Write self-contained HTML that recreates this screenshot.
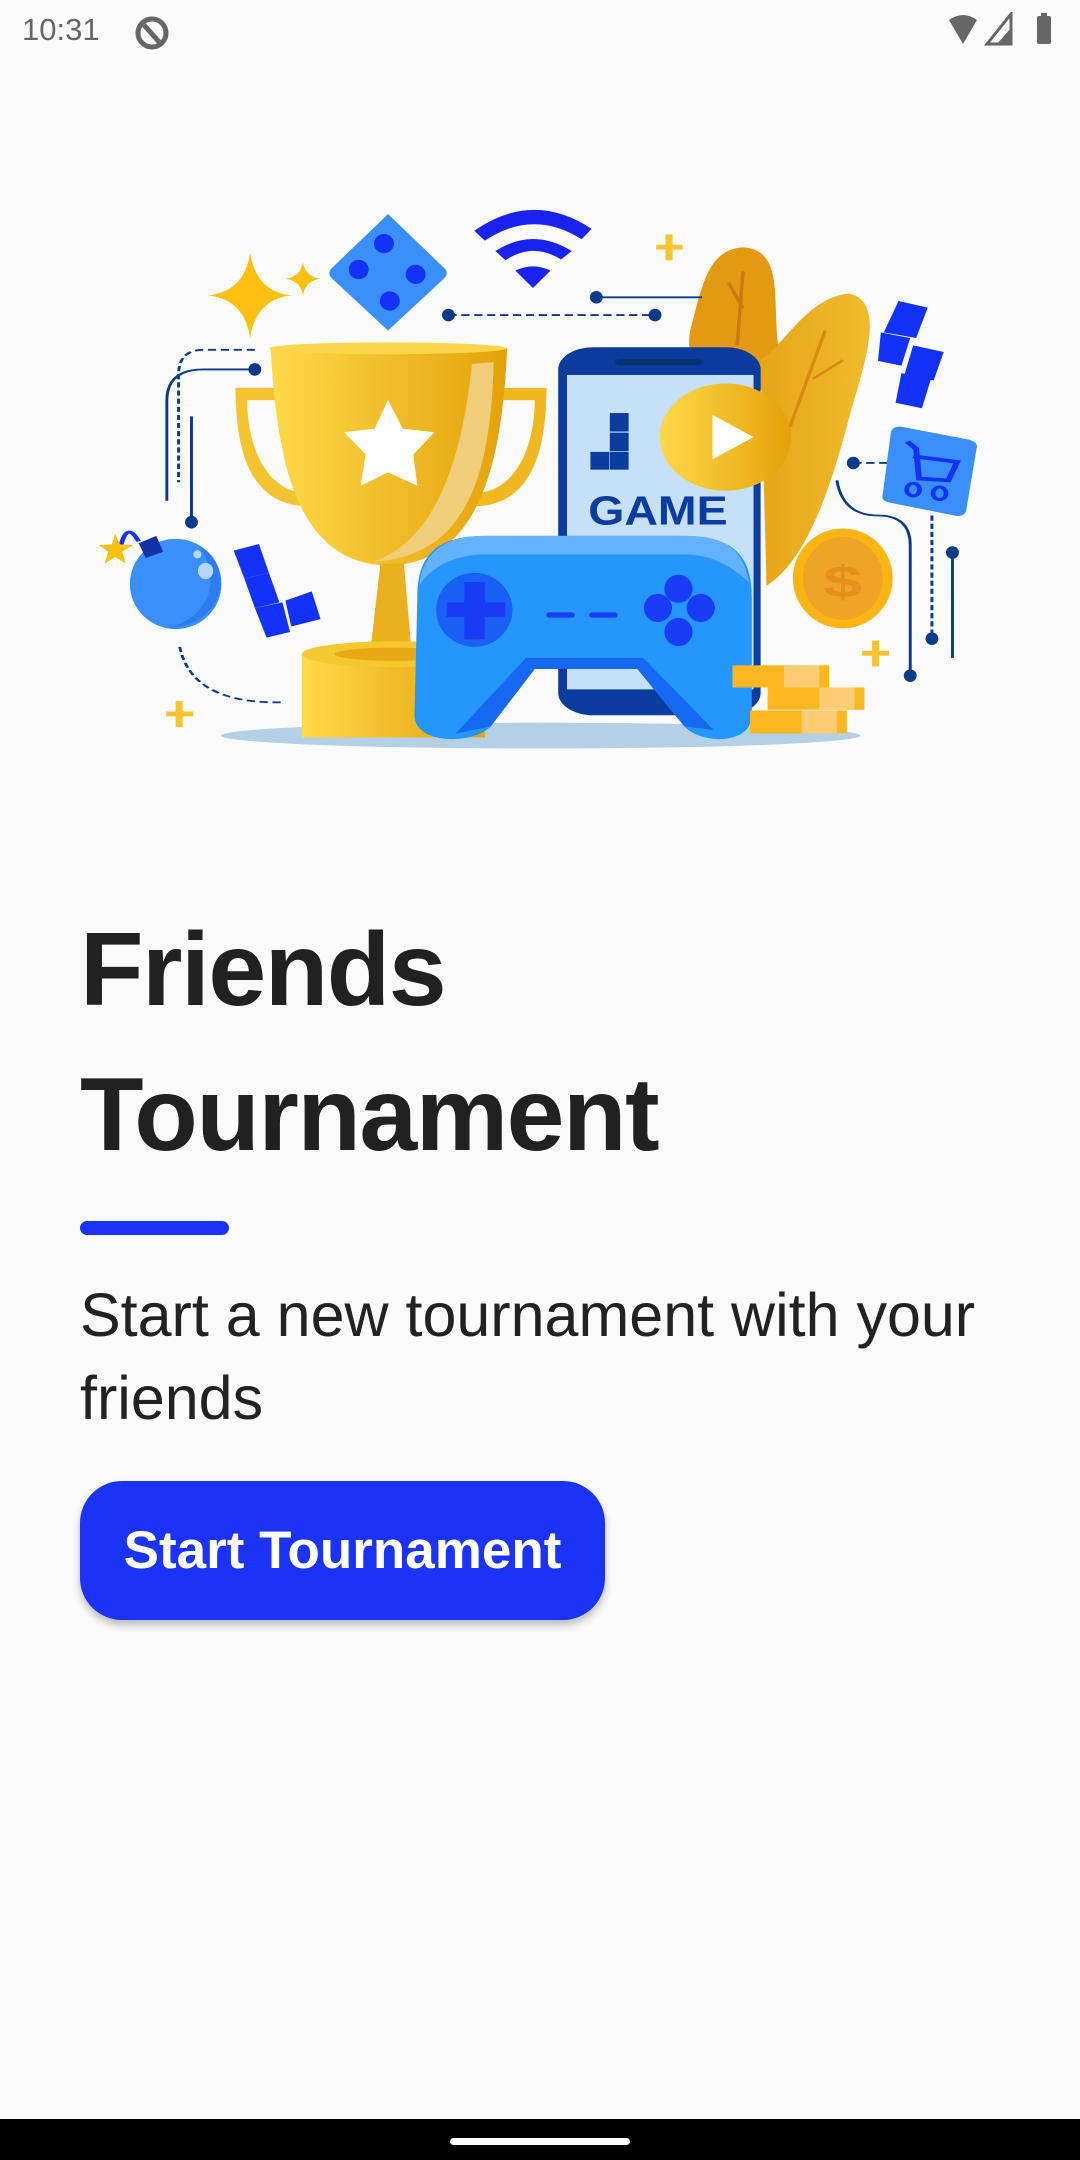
<!DOCTYPE html>
<html><head><meta charset="utf-8"><style>
*{margin:0;padding:0;box-sizing:border-box}
body{width:1080px;height:2160px;background:#fafafa;position:relative;overflow:hidden;font-family:"Liberation Sans",sans-serif}
.abs{position:absolute}
h1{position:absolute;left:80px;font-size:104px;font-weight:bold;color:#212121;letter-spacing:-1.5px;line-height:1}
.sub{position:absolute;left:80px;font-size:61px;color:#222;line-height:83px;width:1000px}
.btn{position:absolute;left:80px;top:1481px;width:525px;height:139px;border-radius:42px;background:#1a33f5;color:#fff;font-weight:bold;font-size:53px;display:flex;align-items:center;justify-content:center;box-shadow:0 5px 8px rgba(0,0,0,.25)}
</style></head><body>
<div class="abs" style="left:22px;top:12px;font-size:31px;color:#666">10:31</div>
<svg class="abs" style="left:132px;top:13px" width="40" height="40" viewBox="0 0 40 40"><circle cx="20" cy="20" r="14" fill="none" stroke="#666" stroke-width="5"/><path d="M12 12 L28 30" stroke="#666" stroke-width="5"/></svg>
<svg class="abs" style="left:945px;top:12px" width="120" height="36" viewBox="0 0 120 36"><path d="M4 8 Q18 -2 32 8 L18 32 Z" fill="#666"/><path d="M42 32 L66 2 L66 32 Z" fill="none" stroke="#666" stroke-width="3"/><path d="M52 32 L66 16 L66 32Z" fill="#666"/><rect x="92" y="4" width="14" height="28" rx="2" fill="#666"/><rect x="96" y="1" width="6" height="4" fill="#666"/></svg>

<svg class="abs" style="left:80px;top:190px" width="920" height="580" viewBox="0 0 1568 1568" preserveAspectRatio="none">
<defs>
<linearGradient id="gold" x1="0" x2="1"><stop offset="0" stop-color="#fdd94a"/><stop offset="1" stop-color="#e4a20a"/></linearGradient>
<linearGradient id="leaf" x1="0" x2="1"><stop offset="0" stop-color="#e7a51a"/><stop offset="1" stop-color="#f0bb2c"/></linearGradient>
</defs>
<ellipse cx="785" cy="1475" rx="545" ry="35" fill="#b4d0e6"/>
<path d="M1130 155 C1200 160 1180 300 1190 420 C1195 520 1150 560 1130 560 C1060 540 1030 470 1040 380 C1060 260 1070 160 1130 155Z" fill="#e39a12"/>
<path d="M1310 280 C1380 300 1330 500 1310 620 C1280 800 1240 1000 1170 1070 L1160 460 C1200 420 1240 290 1310 280Z" fill="url(#leaf)"/>
<path d="M1270 380 L1210 640 M1300 460 L1250 510" stroke="#d98a10" stroke-width="6" fill="none"/>
<path d="M1130 220 L1120 420 M1105 250 L1130 320" stroke="#cc7a0c" stroke-width="6" fill="none"/>
<rect x="815" y="425" width="345" height="995" rx="60" fill="#0a3d9e"/>
<rect x="830" y="500" width="318" height="850" fill="#c6e0f8"/>
<rect x="912" y="458" width="148" height="16" rx="8" fill="#073270"/>
<rect x="903" y="603" width="32" height="50" fill="#0a3d9e"/><rect x="903" y="656" width="32" height="50" fill="#0a3d9e"/><rect x="870" y="708" width="32" height="48" fill="#0a3d9e"/><rect x="903" y="708" width="32" height="48" fill="#0a3d9e"/>
<text x="985" y="905" font-family="Liberation Sans" font-weight="bold" font-size="96" fill="#0a3d9e" text-anchor="middle" transform="translate(985 0) scale(0.72 1) translate(-985 0)" style="font-size:110px">GAME</text>
<ellipse cx="1100" cy="668" rx="112" ry="145" fill="url(#gold)"/>
<path d="M1078 608 L1148 668 L1078 728Z" fill="#fff"/>
<path d="M265 535 L340 535 L340 568 L285 568 C285 700 320 820 390 820 L390 855 C310 855 265 760 265 535Z" fill="#f3c430"/>
<path d="M795 535 L715 535 L715 568 L775 568 C775 700 740 820 670 820 L670 855 C750 855 795 760 795 535Z" fill="#f0b820"/>
<path d="M325 428 L728 428 C720 700 690 1010 525 1015 C360 1010 335 700 325 428Z" fill="url(#gold)"/>
<path d="M668 470 L705 465 C700 800 650 990 500 1005 C600 950 650 750 668 470Z" fill="#f0cd78"/>
<ellipse cx="525" cy="428" rx="202" ry="16" fill="#fcd64a"/>
<path d="M525 568 L550 645 L604 655 L568 715 L575 800 L525 763 L478 800 L487 715 L450 655 L502 645Z" fill="#fff"/>
<path d="M512 1010 L552 1010 L565 1245 L495 1245Z" fill="#e9b11e"/>
<rect x="378" y="1255" width="312" height="225" fill="url(#gold)"/>
<ellipse cx="534" cy="1255" rx="156" ry="35" fill="#f5c830"/>
<ellipse cx="534" cy="1255" rx="100" ry="18" fill="#e7a915"/>
<path d="M690 935 L1030 935 C1120 935 1145 1000 1145 1100 L1145 1420 C1145 1500 1060 1500 1030 1450 L950 1295 L775 1295 L700 1450 C670 1500 570 1500 570 1420 L575 1100 C575 1000 600 935 690 935Z" fill="#2596fb"/>
<path d="M690 935 L1030 935 C1100 935 1130 970 1140 1060 C1100 1000 1060 985 1030 985 L690 985 C650 985 600 1010 578 1070 C585 980 620 935 690 935Z" fill="#64b1fd"/>
<path d="M760 1265 L960 1265 L1080 1460 L1030 1450 L950 1295 L775 1295 L700 1450 L640 1470Z" fill="#1668f0"/>
<ellipse cx="672" cy="1135" rx="65" ry="100" fill="#1a60f5"/>
<path d="M655 1060 h35 v55 h35 v40 h-35 v60 h-35 v-60 h-30 v-40 h30Z" fill="#1a3cf5"/>
<rect x="795" y="1142" width="48" height="14" rx="5" fill="#1a3cf5"/><rect x="868" y="1142" width="48" height="14" rx="5" fill="#1a3cf5"/>
<ellipse cx="1020" cy="1078" rx="24" ry="38" fill="#1a3cf5"/><ellipse cx="985" cy="1130" rx="24" ry="38" fill="#1a3cf5"/><ellipse cx="1058" cy="1130" rx="24" ry="38" fill="#1a3cf5"/><ellipse cx="1020" cy="1195" rx="24" ry="38" fill="#1a3cf5"/>
<ellipse cx="1300" cy="1050" rx="85" ry="135" fill="#fbb411"/>
<ellipse cx="1300" cy="1050" rx="68" ry="112" fill="#eea426"/>
<text x="1300" y="1100" font-family="Liberation Sans" font-weight="bold" font-size="120" fill="#e69020" text-anchor="middle">$</text>
<g fill="#fbb620"><rect x="1112" y="1285" width="165" height="60"/><rect x="1172" y="1345" width="165" height="60"/><rect x="1142" y="1407" width="165" height="62"/></g>
<g fill="#fdd28a" opacity=".8"><rect x="1200" y="1285" width="60" height="60"/><rect x="1260" y="1345" width="60" height="60"/><rect x="1230" y="1407" width="60" height="62"/></g>
<path d="M525 65 L620 210 Q630 225 620 240 L525 380 L430 240 Q420 225 430 210Z" fill="#3b8ffb"/>
<ellipse cx="518" cy="145" rx="17" ry="26" fill="#1432f5"/><ellipse cx="475" cy="215" rx="17" ry="26" fill="#1432f5"/><ellipse cx="572" cy="228" rx="17" ry="26" fill="#1432f5"/><ellipse cx="528" cy="300" rx="17" ry="26" fill="#1432f5"/>
<path d="M672 110 Q772 0 872 105 L855 133 Q772 50 690 137Z" fill="#1a22f0"/>
<path d="M708 165 Q772 100 838 165 L820 188 Q772 140 725 190Z" fill="#1a22f0"/>
<path d="M742 218 Q772 195 802 218 L772 265Z" fill="#1a22f0"/>
<path d="M290 170 Q300 275 360 285 Q300 295 290 400 Q280 295 218 285 Q280 275 290 170Z" fill="#fec010"/>
<path d="M380 195 Q384 235 410 240 Q384 245 380 285 Q376 245 350 240 Q376 235 380 195Z" fill="#fec010"/>
<g fill="#f8c232"><rect x="998" y="120" width="12" height="70"/><rect x="982" y="148" width="45" height="13"/><rect x="1350" y="1218" width="12" height="70"/><rect x="1333" y="1246" width="46" height="13"/><rect x="163" y="1382" width="12" height="70"/><rect x="147" y="1410" width="46" height="13"/></g>
<g stroke="#0a3a8a" stroke-width="5" fill="none">
<path d="M880 290 L1060 290"/><path d="M628 338 L980 338" stroke-dasharray="14 8"/>
<path d="M298 432 L210 432 Q168 432 168 500 L168 790" stroke-dasharray="14 8"/>
<path d="M298 485 L210 485 Q148 485 148 570 L148 840"/><path d="M190 612 L190 895"/>
<path d="M170 1235 Q190 1390 345 1385" stroke-dasharray="14 8"/>
<path d="M1318 738 L1380 738" stroke-dasharray="14 8"/>
<path d="M1290 785 Q1300 880 1360 880 Q1415 880 1415 960 L1415 1310"/>
<path d="M1452 880 L1452 1210" stroke-dasharray="14 8"/><path d="M1487 980 L1487 1265"/>
</g>
<g fill="#0a3a8a"><ellipse cx="880" cy="290" rx="11" ry="17"/><ellipse cx="628" cy="338" rx="11" ry="17"/><ellipse cx="980" cy="338" rx="11" ry="17"/><ellipse cx="298" cy="485" rx="11" ry="17"/><ellipse cx="190" cy="898" rx="11" ry="17"/><ellipse cx="1318" cy="738" rx="11" ry="17"/><ellipse cx="1415" cy="1313" rx="11" ry="17"/><ellipse cx="1452" cy="1213" rx="11" ry="17"/><ellipse cx="1487" cy="980" rx="11" ry="17"/></g>
<g fill="#1432f5">
<path d="M1395 300 L1445 318 L1425 400 L1370 385Z"/><path d="M1365 385 L1415 400 L1400 475 L1360 462Z"/><path d="M1420 420 L1472 438 L1455 515 L1405 500Z"/><path d="M1400 495 L1450 512 L1435 590 L1390 575Z"/>
<path d="M262 975 L305 957 L322 1035 L280 1050Z"/><path d="M280 1050 L322 1035 L340 1115 L298 1130Z"/><path d="M298 1130 L345 1115 L358 1195 L318 1210Z"/><path d="M350 1110 L395 1085 L410 1160 L360 1180Z"/>
</g>
<path d="M1400 640 L1515 675 Q1532 682 1528 700 L1510 870 Q1505 885 1490 880 L1380 845 Q1365 840 1368 825 L1382 655 Q1385 638 1400 640Z" fill="#3b8ffb"/>
<path d="M1410 680 L1425 700 L1430 780 L1480 785 L1495 735 L1420 720" stroke="#1432f5" stroke-width="10" fill="none"/>
<ellipse cx="1420" cy="810" rx="11" ry="17" fill="none" stroke="#1432f5" stroke-width="8"/><ellipse cx="1465" cy="820" rx="11" ry="17" fill="none" stroke="#1432f5" stroke-width="8"/>
<ellipse cx="163" cy="1065" rx="78" ry="122" fill="#3b8ffb"/>
<path d="M150 1185 C230 1150 240 1030 200 960 C260 1000 260 1170 150 1185Z" fill="#2f7cf0"/>
<ellipse cx="214" cy="1030" rx="13" ry="22" fill="#b6d6fd"/><ellipse cx="200" cy="985" rx="7" ry="11" fill="#b6d6fd"/>
<path d="M100 955 L130 935 L142 978 L112 995Z" fill="#1432a5"/>
<path d="M100 950 Q80 895 70 960" stroke="#1432f5" stroke-width="8" fill="none"/>
<path d="M60 930 L68 958 L90 960 L72 978 L78 1010 L60 992 L42 1010 L48 978 L32 960 L54 958Z" fill="#fec010"/>
</svg>

<h1 style="top:918px">Friends</h1>
<h1 style="top:1063px">Tournament</h1>
<div class="abs" style="left:80px;top:1221px;width:149px;height:14px;border-radius:7px;background:#1a33f5"></div>
<div class="sub" style="top:1274px">Start a new tournament with your<br>friends</div>
<div class="btn">Start Tournament</div>
<div class="abs" style="left:0;top:2119px;width:1080px;height:41px;background:#000"></div>
<div class="abs" style="left:450px;top:2138px;width:180px;height:7px;border-radius:4px;background:#fff"></div>
</body></html>
